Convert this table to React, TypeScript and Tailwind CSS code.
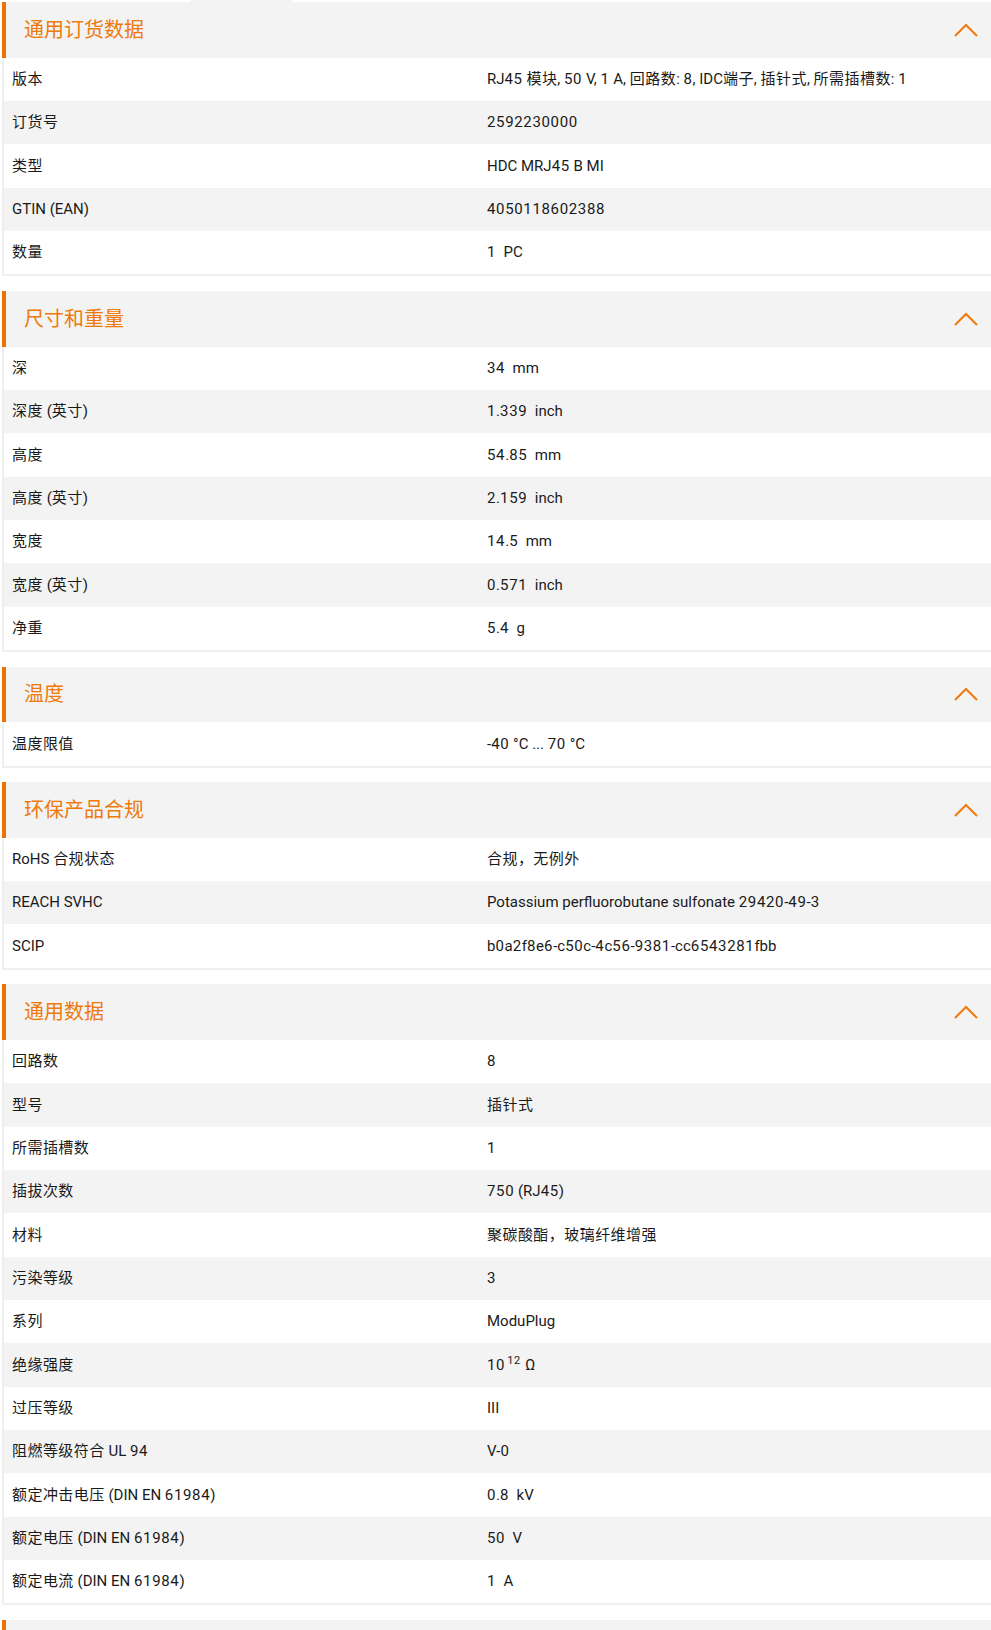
import React from "react";

type Row = { label: string; value: React.ReactNode };
type Section = { title: string; rows: Row[] };

const u = (n: string, unit: string) => `${n}\u00a0\u00a0${unit}`;

function T({ text }: { text: string }) {
  const parts = text.split(/(\d+|[\u4e00-\u9fff\uff0c]+)/);
  return (
    <>
      {parts.map((p, i) => {
        if (!p) return null;
        if (/^\d+$/.test(p)) return <span key={i} className="tracking-[0.65px]">{p}</span>;
        if (/^[\u4e00-\u9fff\uff0c]+$/.test(p)) return <span key={i} className="tracking-[0.45px]">{p}</span>;
        return <span key={i}>{p}</span>;
      })}
    </>
  );
}

const sections: Section[] = [
  {
    title: "通用订货数据",
    rows: [
      { label: "版本", value: "RJ45 模块, 50 V, 1 A, 回路数: 8, IDC端子, 插针式, 所需插槽数: 1" },
      { label: "订货号", value: "2592230000" },
      { label: "类型", value: "HDC MRJ45 B MI" },
      { label: "GTIN (EAN)", value: "4050118602388" },
      { label: "数量", value: u("1", "PC") },
    ],
  },
  {
    title: "尺寸和重量",
    rows: [
      { label: "深", value: u("34", "mm") },
      { label: "深度 (英寸)", value: u("1.339", "inch") },
      { label: "高度", value: u("54.85", "mm") },
      { label: "高度 (英寸)", value: u("2.159", "inch") },
      { label: "宽度", value: u("14.5", "mm") },
      { label: "宽度 (英寸)", value: u("0.571", "inch") },
      { label: "净重", value: u("5.4", "g") },
    ],
  },
  {
    title: "温度",
    rows: [{ label: "温度限值", value: "-40 °C ... 70 °C" }],
  },
  {
    title: "环保产品合规",
    rows: [
      { label: "RoHS 合规状态", value: "合规，无例外" },
      { label: "REACH SVHC", value: "Potassium perfluorobutane sulfonate 29420-49-3" },
      { label: "SCIP", value: "b0a2f8e6-c50c-4c56-9381-cc6543281fbb" },
    ],
  },
  {
    title: "通用数据",
    rows: [
      { label: "回路数", value: "8" },
      { label: "型号", value: "插针式" },
      { label: "所需插槽数", value: "1" },
      { label: "插拔次数", value: "750 (RJ45)" },
      { label: "材料", value: "聚碳酸酯，玻璃纤维增强" },
      { label: "污染等级", value: "3" },
      { label: "系列", value: "ModuPlug" },
      {
        label: "绝缘强度",
        value: (
          <span className="tracking-[0.65px]">
            10<sup className="text-[11px] ml-[2px]">12</sup> Ω
          </span>
        ),
      },
      { label: "过压等级", value: "III" },
      { label: "阻燃等级符合 UL 94", value: "V-0" },
      { label: "额定冲击电压 (DIN EN 61984)", value: u("0.8", "kV") },
      { label: "额定电压 (DIN EN 61984)", value: u("50", "V") },
      { label: "额定电流 (DIN EN 61984)", value: u("1", "A") },
    ],
  },
];

function Chevron() {
  return (
    <svg width="26" height="16" viewBox="0 0 26 16" fill="none">
      <polyline points="2,14 13,3 24,14" stroke="#ee7a0c" strokeWidth="2" fill="none" />
    </svg>
  );
}

function Header({ title }: { title: string }) {
  return (
    <div className="h-[55.7px] bg-[#f3f3f3] border-l-[4px] border-[#ee7203] flex items-center justify-between pl-[18px] pr-[12px]">
      <span className="text-[20px] leading-none text-[#ee7a0c]">{title}</span>
      <Chevron />
    </div>
  );
}

export default function App() {
  return (
    <div
      className="w-[991px] overflow-hidden bg-white text-[#1a1a1a]"
      style={{ fontFamily: 'Roboto, "Noto Sans CJK SC", sans-serif' }}
    >
      <div className="h-[2px] flex">
        <div className="w-[191px]" />
        <div className="w-[101px] bg-[#f2f2f2]" />
      </div>
      {sections.map((s, si) => (
        <div key={si} className="ml-[2px] mb-[14.5px]">
          <Header title={s.title} />
          <div className="border-l-[2px] border-b-[2.5px] border-[#efefef]">
            {s.rows.map((r, ri) => (
              <div
                key={ri}
                className={`h-[43.35px] grid grid-cols-[475px_1fr] items-center text-[15px] ${
                  ri % 2 === 1 ? "bg-[#f3f3f3]" : "bg-white"
                }`}
              >
                <div className="pl-[8px]">
                  <T text={r.label} />
                </div>
                <div className="pl-[8px]">
                  {typeof r.value === "string" ? <T text={r.value} /> : r.value}
                </div>
              </div>
            ))}
          </div>
        </div>
      ))}
      <div className="ml-[2px]">
        <Header title="" />
      </div>
    </div>
  );
}
